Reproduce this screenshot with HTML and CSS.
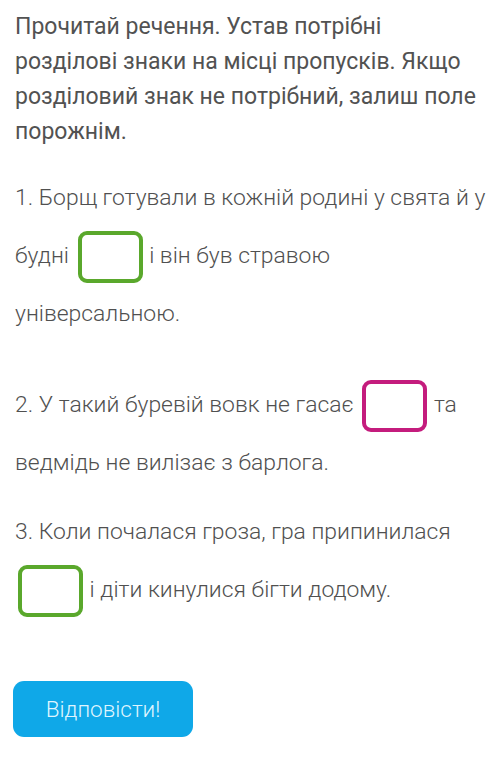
FILE: index.html
```html
<!DOCTYPE html>
<html lang="uk">
<head>
<meta charset="utf-8">
<link rel="stylesheet" href="styles.css">
</head>
<body>
<div class="page">
  <p class="task">Прочитай речення. Устав потрібні розділові знаки на місці пропусків. Якщо розділовий знак не потрібний, залиш поле порожнім.</p>
  <p class="item item1">1. Борщ готували в кожній родині у свята й у будні <span class="blank green"></span> і він був стравою універсальною.</p>
  <p class="item item2">2. У такий буревій вовк не гасає <span class="blank magenta"></span> та ведмідь не вилізає з барлога.</p>
  <p class="item item3">3. Коли почалася гроза, гра припинилася <span class="blank green"></span> і діти кинулися бігти додому.</p>
  <button class="answer">Відповісти!</button>
</div>
</body>
</html>
```

FILE: styles.css
```css
html, body {
  margin: 0;
  padding: 0;
  background: #ffffff;
}

.page {
  padding: 9px 8px 0 15px;
  font-family: Roboto, "Noto Sans", sans-serif;
  color: #4a4a4a;
}

.task {
  margin: 0 13px 0 0;
  font-size: 23px;
  line-height: 35px;
  font-weight: 400;
  color: #525252;
}

.item {
  margin: 0;
  font-size: 22.9px;
  line-height: 58px;
  font-weight: 300;
  color: #505050;
}

.item1 { margin-top: 20px; }
.item2 { margin-top: 33px; }
.item3 { margin-top: 11px; }

.blank {
  display: inline-block;
  box-sizing: border-box;
  width: 65px;
  height: 52px;
  margin: 0 1px 0 3px;
  border: 4px solid #5aa82c;
  border-radius: 9px;
  vertical-align: middle;
  background: #ffffff;
}

.blank.magenta {
  border-color: #c41c7d;
}

.answer {
  display: block;
  margin: 62px 0 0 -2px;
  width: 180px;
  height: 56px;
  border: 0;
  border-radius: 11px;
  background: #0fa8e8;
  color: #dff5ff;
  font-family: Roboto, "Noto Sans", sans-serif;
  font-size: 22.5px;
  font-weight: 300;
  padding: 0;
}
```
